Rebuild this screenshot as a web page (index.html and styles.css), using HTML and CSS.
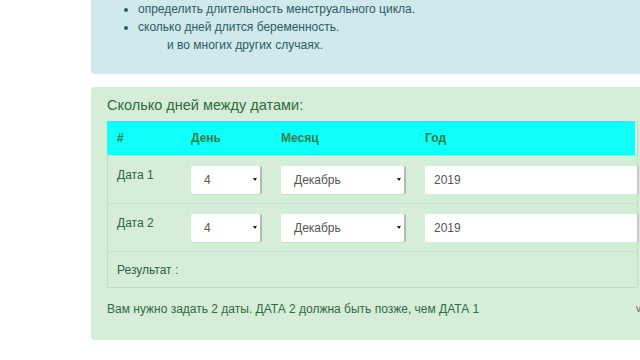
FILE: index.html
```html
<!DOCTYPE html>
<html lang="ru">
<head>
<meta charset="utf-8">
<title>Сколько дней между датами</title>
<link rel="stylesheet" href="styles.css">
</head>
<body>
<div class="page">
  <div class="info">
    <ul class="list">
      <li>определить длительность менструального цикла.</li>
      <li>сколько дней длится беременность.</li>
    </ul>
    <p class="more">и во многих других случаях.</p>
  </div>
  <div class="calc">
    <h2 class="title">Сколько дней между датами:</h2>
    <div class="table">
      <div class="row head">
        <div class="c c1">#</div>
        <div class="c c2">День</div>
        <div class="c c3">Месяц</div>
        <div class="c c4">Год</div>
      </div>
      <div class="row">
        <div class="c c1 label">Дата 1</div>
        <div class="c c2"><div class="sel day"><span>4</span><i class="arr"></i></div></div>
        <div class="c c3"><div class="sel month"><span>Декабрь</span><i class="arr"></i></div></div>
        <div class="c c4"><div class="inp">2019</div></div>
      </div>
      <div class="row">
        <div class="c c1 label">Дата 2</div>
        <div class="c c2"><div class="sel day"><span>4</span><i class="arr"></i></div></div>
        <div class="c c3"><div class="sel month"><span>Декабрь</span><i class="arr"></i></div></div>
        <div class="c c4"><div class="inp">2019</div></div>
      </div>
      <div class="row last">
        <div class="c label">Результат :</div>
      </div>
    </div>
    <div class="note"><span>Вам нужно задать 2 даты. ДАТА 2 должна быть позже, чем ДАТА 1</span><span class="cut">v</span></div>
  </div>
</div>
</body>
</html>
```

FILE: styles.css
```css
html, body {
  margin: 0;
  padding: 0;
  background: #ffffff;
  overflow: hidden;
}
body {
  font-family: "Liberation Sans", Arial, sans-serif;
  font-size: 12px;
  color: #333;
}
.page {
  padding-left: 91px;
  width: 580px;
}
.info {
  background: #d0e9ed;
  border-radius: 0 0 4px 4px;
  padding: 0 0 20px 0;
  color: #2f5a66;
  line-height: 18px;
}
.list {
  margin: 0;
  padding-left: 47px;
}
.list li {
  line-height: 18px;
}
.more {
  margin: 0;
  padding-left: 76px;
}
.calc {
  margin-top: 13px;
  background: #d6eed8;
  border-radius: 4px 0 0 4px;
  padding: 8px 0 22px 16px;
  color: #2f6b3f;
}
.title {
  margin: 0 0 6px 0;
  font-size: 14.5px;
  font-weight: normal;
  line-height: 20px;
  color: #2f6b3f;
}
.table {
  width: 531px;
  border: 1px solid #c3dcc5;
  border-top: none;
  box-sizing: border-box;
}
.row {
  display: flex;
  border-top: 1px solid #c9e0ca;
  padding: 10px 0 9px 0;
  min-height: 28px;
}
.row.head {
  background: #0ffffb;
  border-top: none;
  padding: 0;
  height: 34px;
  align-items: center;
  font-size: 12px;
  font-weight: bold;
  color: #297f4b;
  margin-left: -1px;
  margin-right: 2px;
}
.row.last {
  padding: 9px 0 8px 0;
  min-height: 18px;
}
.c {
  padding-left: 9px;
  box-sizing: border-box;
  line-height: 18px;
}
.head .c { padding-left: 10px; }
.c1 { width: 74px; }
.c2 { width: 90px; }
.c3 { width: 144px; }
.c4 { flex: 1; }
.label {
  color: #2f5f45;
  font-size: 12px;
  padding-left: 9px;
}
.sel {
  position: relative;
  height: 28px;
  background: #fff;
  border-radius: 2px;
  box-shadow: 0 1px 1px rgba(0,0,0,0.08);
  display: flex;
  align-items: center;
  padding-left: 13px;
  box-sizing: border-box;
  font-size: 12px;
  color: #555;
  border-right: 2px solid #b9b9b9;
}
.sel.day { width: 71px; }
.sel.month { width: 125px; }
.arr {
  position: absolute;
  right: 3px;
  top: 12px;
  width: 0;
  height: 0;
  border-left: 2px solid transparent;
  border-right: 2px solid transparent;
  border-top: 3px solid #222;
}
.inp {
  height: 28px;
  background: #fff;
  border-radius: 2px 0 0 2px;
  display: flex;
  align-items: center;
  padding-left: 9px;
  font-size: 12px;
  color: #555;
  margin-right: -2px;
  border-right: 2px solid #c8c8c8;
}
.note {
  margin-top: 12px;
  line-height: 18px;
  color: #2f6b3f;
  font-size: 12px;
  display: flex;
  width: 534px;
  justify-content: space-between;
}
.cut {
  color: #666;
  font-size: 10px;
}
```
